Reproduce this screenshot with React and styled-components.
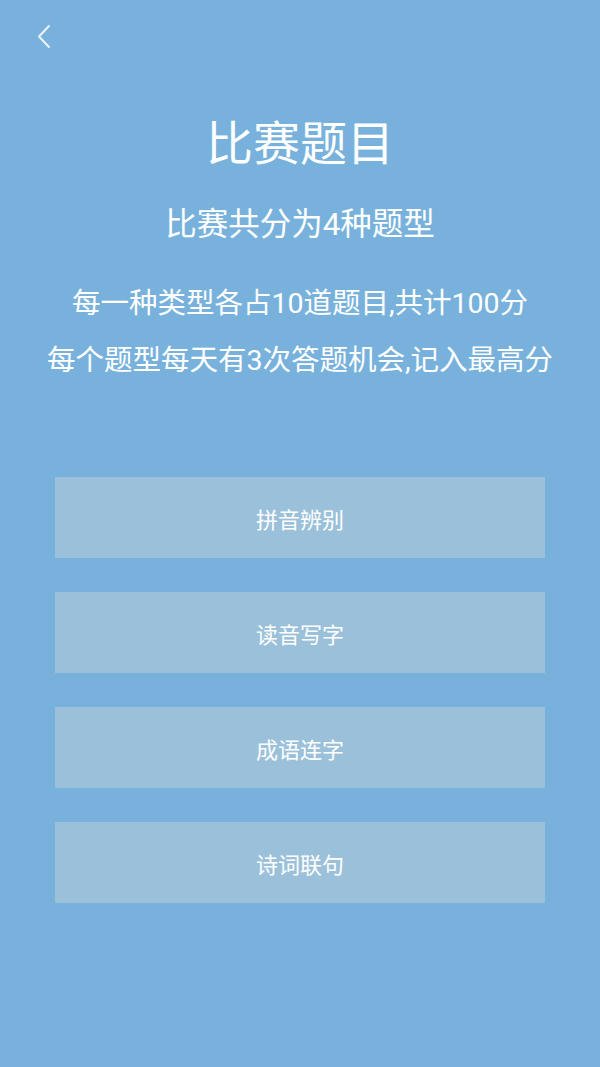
import styled, { createGlobalStyle } from 'styled-components';

const QUIZ_TYPES = ['拼音辨别', '读音写字', '成语连字', '诗词联句'];

const FONT_STACK = `Roboto, "Noto Sans CJK SC", "Noto Sans", sans-serif`;

const GlobalStyle = createGlobalStyle`
  html, body {
    margin: 0;
    padding: 0;
    background: #78b2dc;
  }
  body {
    font-family: ${FONT_STACK};
    color: #fff;
  }
`;

const App = () => {
  return (
    <Page>
      <GlobalStyle />
      <Header>
        <BackButton aria-label="返回">
          <svg width="16" height="26" viewBox="0 0 16 26" fill="none">
            <path
              d="M12 2 L2 12.5 L12 23"
              stroke="rgba(255,255,255,0.85)"
              strokeWidth="2"
              strokeLinecap="round"
              strokeLinejoin="round"
            />
          </svg>
        </BackButton>
      </Header>
      <Intro>
        <Title>比赛题目</Title>
        <Subtitle>比赛共分为4种题型</Subtitle>
        <Rule>每一种类型各占10道题目,共计100分</Rule>
        <Rule $tight>每个题型每天有3次答题机会,记入最高分</Rule>
      </Intro>
      <TypeList>
        {QUIZ_TYPES.map((type) => (
          <TypeButton key={type}>{type}</TypeButton>
        ))}
      </TypeList>
    </Page>
  );
};

export default App;

const Page = styled.div`
  width: 600px;
  min-height: 1067px;
  background: #78b2dc;
  display: flex;
  flex-direction: column;
`;

const Header = styled.div`
  height: 75px;
  display: flex;
  align-items: flex-start;
  padding: 24px 0 0 37px;
  box-sizing: border-box;
`;

const BackButton = styled.button`
  border: none;
  background: none;
  padding: 0;
  width: 16px;
  height: 26px;
  cursor: pointer;
`;

const Intro = styled.div`
  display: flex;
  flex-direction: column;
  align-items: center;
  text-align: center;
`;

const Title = styled.h1`
  margin: 41px 0 0;
  font-size: 47px;
  font-weight: 400;
  line-height: 55px;
`;

const Subtitle = styled.h2`
  margin: 34px 0 0;
  font-size: 31.5px;
  font-weight: 400;
  line-height: 40px;
`;

const Rule = styled.p`
  margin: ${(p) => (p.$tight ? '17px' : '39px')} 0 0;
  font-size: 28.5px;
  line-height: 40px;
`;

const TypeList = styled.div`
  display: flex;
  flex-direction: column;
  gap: 34px;
  padding: 0 55px;
  margin-top: 96px;
`;

const TypeButton = styled.button`
  height: 81px;
  border: none;
  background: #9bc1da;
  color: #fff;
  font-family: ${FONT_STACK};
  font-size: 22px;
  cursor: pointer;
`;
